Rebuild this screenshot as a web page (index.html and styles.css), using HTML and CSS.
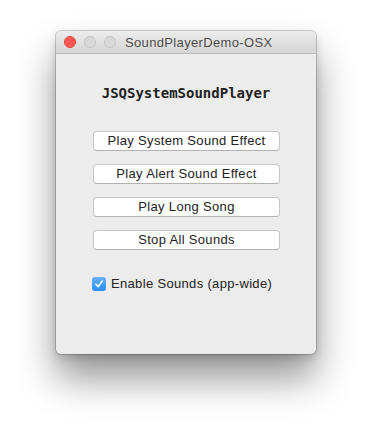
FILE: index.html
```html
<!DOCTYPE html>
<html>
<head>
<meta charset="utf-8">
<link rel="stylesheet" href="styles.css">
</head>
<body>
<div class="stage">
  <div class="window">
    <div class="titlebar">
      <div class="lights">
        <span class="light close"></span>
        <span class="light"></span>
        <span class="light"></span>
      </div>
      <div class="title">SoundPlayerDemo-OSX</div>
    </div>
    <div class="content">
      <div class="heading">JSQSystemSoundPlayer</div>
      <div class="buttons">
        <button class="btn">Play System Sound Effect</button>
        <button class="btn">Play Alert Sound Effect</button>
        <button class="btn">Play Long Song</button>
        <button class="btn">Stop All Sounds</button>
      </div>
      <label class="check">
        <span class="box"><svg width="10" height="10" viewBox="0 0 10 10"><path d="M2 5.2 L4.2 7.6 L8.2 2" fill="none" stroke="#fff" stroke-width="1.6" stroke-linecap="round" stroke-linejoin="round"/></svg></span>
        <span class="check-label">Enable Sounds (app-wide)</span>
      </label>
    </div>
  </div>
</div>
</body>
</html>
```
FILE: styles.css
```css
html, body {
  margin: 0;
  padding: 0;
  background: #fff;
}
.stage {
  width: 372px;
  height: 434px;
  padding: 31px 0 0 56px;
  box-sizing: border-box;
}
.window {
  width: 260px;
  height: 323px;
  border-radius: 5px;
  background: #ececec;
  box-shadow: 0 0 0 1px rgba(0,0,0,0.18), 0 24px 38px rgba(0,0,0,0.42), 0 4px 10px rgba(0,0,0,0.15);
  overflow: hidden;
  display: flex;
  flex-direction: column;
}
.titlebar {
  height: 22px;
  border-bottom: 1px solid #bcbcbc;
  background: linear-gradient(#ececec, #d6d6d6);
  display: flex;
  align-items: center;
}
.lights {
  display: flex;
  gap: 8px;
  padding-left: 8px;
}
.light {
  width: 12px;
  height: 12px;
  border-radius: 50%;
  box-sizing: border-box;
  background: #d9d9d9;
  border: 1px solid #c4c4c4;
}
.light.close {
  background: #fc5753;
  border-color: #de4440;
}
.title {
  white-space: nowrap;
  font-family: "Liberation Sans", Arial, sans-serif;
  font-size: 13px;
  letter-spacing: 0.35px;
  color: #4d4d4d;
  margin-left: 9px;
}
.content {
  display: flex;
  flex-direction: column;
  align-items: center;
  padding-top: 31px;
}
.heading {
  font-family: "DejaVu Sans Mono", monospace;
  font-weight: bold;
  font-size: 14px;
  color: #222;
  line-height: 16px;
}
.buttons {
  display: flex;
  flex-direction: column;
  gap: 13px;
  margin-top: 30px;
  padding-left: 1px;
}
.btn {
  width: 187px;
  height: 20px;
  padding: 0;
  border: 1px solid #c6c6c6;
  border-bottom-color: #b2b2b2;
  border-radius: 4px;
  background: #fff;
  font-family: "Liberation Sans", Arial, sans-serif;
  font-size: 13px;
  letter-spacing: 0.33px;
  color: #222;
  line-height: 18px;
}
.check {
  display: flex;
  align-items: center;
  align-self: flex-start;
  margin-left: 36px;
  margin-top: 26px;
  gap: 5px;
}
.box {
  width: 14px;
  height: 14px;
  border-radius: 3px;
  background: linear-gradient(#67b0fb, #2d8ef9);
  display: flex;
  align-items: center;
  justify-content: center;
}
.check-label {
  font-family: "Liberation Sans", Arial, sans-serif;
  font-size: 13px;
  letter-spacing: 0.33px;
  color: #222;
}
```
